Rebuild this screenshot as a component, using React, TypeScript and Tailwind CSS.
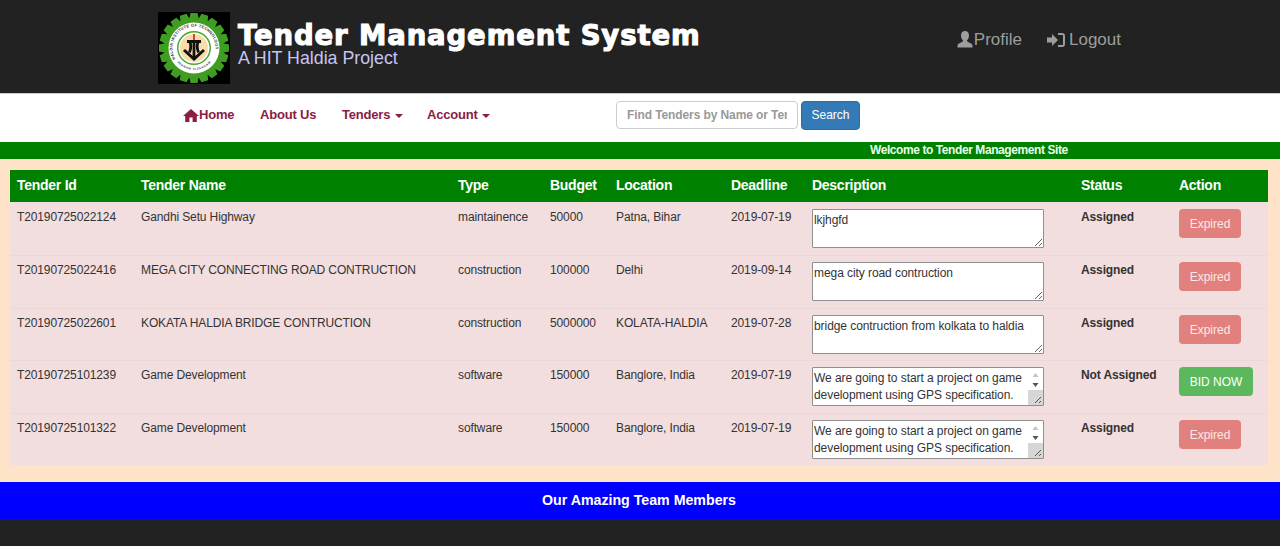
import React from "react";

const longDesc = "We are going to start a project on game development using GPS specification. The project will run for a long period of time.";

const tenders = [
  { id: "T20190725022124", name: "Gandhi Setu Highway", type: "maintainence", budget: "50000", location: "Patna, Bihar", deadline: "2019-07-19", desc: "lkjhgfd", status: "Assigned" },
  { id: "T20190725022416", name: "MEGA CITY CONNECTING ROAD CONTRUCTION", type: "construction", budget: "100000", location: "Delhi", deadline: "2019-09-14", desc: "mega city road contruction", status: "Assigned" },
  { id: "T20190725022601", name: "KOKATA HALDIA BRIDGE CONTRUCTION", type: "construction", budget: "5000000", location: "KOLATA-HALDIA", deadline: "2019-07-28", desc: "bridge contruction from kolkata to haldia", status: "Assigned" },
  { id: "T20190725101239", name: "Game Development", type: "software", budget: "150000", location: "Banglore, India", deadline: "2019-07-19", desc: longDesc, status: "Not Assigned" },
  { id: "T20190725101322", name: "Game Development", type: "software", budget: "150000", location: "Banglore, India", deadline: "2019-07-19", desc: longDesc, status: "Assigned" },
];

// row heights of the screenshot, they don't come out even
const rowHeights = ["h-[53px]", "h-[53px]", "h-[52px]", "h-[53px]", "h-[52px]"];

function Logo() {
  const teeth = Array.from({ length: 20 }, (_, i) => i * 18);
  return (
    <svg width="72" height="72" viewBox="0 0 72 72" className="shrink-0 bg-black">
      {teeth.map((a) => (
        <path key={a} d="M31 8l1.500-7h7L41 8z" fill="#3f9e22" transform={`rotate(${a} 36 36)`} />
      ))}
      <circle cx="36" cy="36" r="30" fill="#3f9e22" />
      <circle cx="36" cy="36" r="25.500" fill="#fff" />
      <path id="logoArc" d="M 17.500 47 A 21.500 21.500 0 1 1 54.500 47" fill="none" />
      <text fontSize="4" fontWeight="700" fontFamily="'Liberation Sans', sans-serif" fill="#333">
        <textPath href="#logoArc" textLength="80">HALDIA INSTITUTE OF TECHNOLOGY</textPath>
      </text>
      <path id="logoArcLow" d="M 19 50 A 22 22 0 0 0 53 50" fill="none" />
      <text fontSize="3" fontWeight="700" fontFamily="'Liberation Sans', sans-serif" fill="#444">
        <textPath href="#logoArcLow" textLength="38">JNANAM VIJNANAM</textPath>
      </text>
      <circle cx="36" cy="36" r="17" fill="#47a62c" />
      <circle cx="36" cy="36" r="15.500" fill="#fff" />
      <circle cx="36" cy="36" r="14" fill="#fbdca8" />
      <path d="M36 22v6" stroke="#c0261c" strokeWidth="1.600" />
      <path d="M29 29.500h14M31.500 29.500c2 3 1.500 7 0 11M40.500 29.500c-2 3-1.500 7 0 11M36 28v18" stroke="#111" strokeWidth="2.800" fill="none" />
      <path d="M26 38l10 9 10-9" stroke="#111" strokeWidth="3" fill="none" />
    </svg>
  );
}

function Caret() {
  return <span className="ml-[1px] inline-block align-middle border-x-[4px] border-t-[4px] border-x-transparent border-t-[#8a1c45]" />;
}

// fake classic scrollbar, the headless browser only has overlay ones
function ScrollBar() {
  return (
    <svg width="15" height="37" viewBox="0 0 15 37" className="absolute right-[1px] top-[1px]">
      <rect width="15" height="37" fill="#fff" />
      <rect y="22" width="15" height="15" fill="#d6d6d6" />
      <path d="M7.500 5l3 4h-6z" fill="#c4c4c4" />
      <path d="M7.500 19l3-4h-6z" fill="#555" />
      <path d="M7 35l6-6M11 35l2-2" stroke="#555" strokeWidth="1" />
    </svg>
  );
}

export default function App() {
  return (
    <div className="min-h-[546px] bg-[#fee3c9] font-['Liberation_Sans',Arial,sans-serif] text-[12px] tracking-[-0.120px] text-[#333]">
      {/* HEADER */}
      <header className="flex h-[94px] items-start border-b border-[#d9c8b4] bg-[#222] tracking-normal">
        <div className="ml-[158px] mt-3 flex items-start">
          <Logo />
          <div className="ml-[8px] mt-[8px]">
            <div className="font-['DejaVu_Sans',sans-serif] text-[27.500px] font-bold leading-[30px] tracking-[0.880px] text-white [-webkit-text-stroke:1.100px_white]">Tender Management System</div>
            <div className="text-[17.800px] leading-[16px] text-[#c5c5f5]">A HIT Haldia Project</div>
          </div>
        </div>
        <div className="ml-auto mr-[159px] mt-[29px] flex gap-[25px] text-[17px] leading-[22px] text-[#9d9d9d]">
          <span className="flex items-center">
            <svg width="18" height="18" viewBox="0 0 17 18" fill="currentColor"><path d="M8.500 0c2.600 0 4 2 4 4.600 0 2-.9 4-2.100 5 .1 1 .8 1.300 2.200 2 1.900.9 3.400 1.600 3.400 3.400v1.500H1v-1.500c0-1.800 1.500-2.500 3.400-3.400 1.400-.7 2.100-1 2.200-2-1.200-1-2.100-3-2.100-5C4.500 2 5.900 0 8.500 0z" /></svg>
            Profile
          </span>
          <span className="flex items-center gap-[3px]">
            <svg width="19" height="16" viewBox="0 0 19 16" fill="currentColor"><path d="M0 5.500h5V2l6 6-6 6v-3.500H0z" /><path d="M11 1h4c2 0 3 1.200 3 3v8c0 1.800-1 3-3 3h-4v-2h4c.8 0 1-.4 1-1V4c0-.6-.2-1-1-1h-4z" /></svg>
            Logout
          </span>
        </div>
      </header>

      {/* NAV */}
      <nav className="flex h-[48px] items-center bg-white pb-[6px] pl-[183px] text-[13px] font-bold tracking-[-0.200px] text-[#8a1c45]">
        <span className="flex w-[77px] items-center">
          <svg width="16" height="13" viewBox="0 0 16 13" fill="currentColor"><path d="M8 0l8 7h-2.200v6H9.600V8.500H6.400V13H2.200V7H0z" /></svg>
          Home
        </span>
        <span className="w-[82px]">About Us</span>
        <span className="w-[85px]">Tenders <Caret /></span>
        <span className="w-[189px]">Account <Caret /></span>
        <input
          readOnly
          placeholder="Find Tenders by Name or Tender Id"
          className="h-[28px] w-[182px] rounded border border-[#ccc] bg-white px-[10px] text-[12px] font-bold tracking-[-0.100px] outline-none placeholder:text-[#999]"
        />
        <button className="ml-[3px] h-[29px] w-[59px] rounded border border-[#2e6da4] bg-[#337ab7] text-[12px] font-normal tracking-normal text-white">Search</button>
      </nav>

      {/* MARQUEE */}
      <div className="h-[17px] bg-[#008000] pl-[870px] text-[12px] font-bold leading-[16px] tracking-[-0.420px] text-[#e8ffe8]">Welcome to Tender Management Site</div>

      {/* TABLE */}
      <div className="px-[10px] pt-[11px]">
        <table className="w-[1258px] table-fixed border-separate border-spacing-0 bg-[#f2dede]">
          <colgroup>
            <col className="w-[124px]" />
            <col className="w-[317px]" />
            <col className="w-[92px]" />
            <col className="w-[66px]" />
            <col className="w-[115px]" />
            <col className="w-[81px]" />
            <col className="w-[269px]" />
            <col className="w-[98px]" />
            <col className="w-[96px]" />
          </colgroup>
          <thead>
            <tr className="h-[32px] bg-[#008000] text-left text-[14px] font-bold tracking-[-0.270px] text-white">
              {["Tender Id", "Tender Name", "Type", "Budget", "Location", "Deadline", "Description", "Status", "Action"].map((h) => (
                <th key={h} className="px-[7px] pb-[1px] font-bold">{h}</th>
              ))}
            </tr>
          </thead>
          <tbody>
            {tenders.map((t, i) => {
              const cell = i > 0 ? "border-t border-[#ebd8d8] px-[7px] pt-[6px]" : "px-[7px] pt-[7px]";
              return (
                <tr key={t.id} className={`align-top ${rowHeights[i]}`}>
                  <td className={`${cell} leading-[17px]`}>{t.id}</td>
                  <td className={`${cell} leading-[17px]`}>{t.name}</td>
                  <td className={`${cell} leading-[17px]`}>{t.type}</td>
                  <td className={`${cell} leading-[17px]`}>{t.budget}</td>
                  <td className={`${cell} leading-[17px]`}>{t.location}</td>
                  <td className={`${cell} leading-[17px]`}>{t.deadline}</td>
                  <td className={cell}>
                    <div className="relative w-[232px]">
                      <textarea
                        readOnly
                        rows={2}
                        value={t.desc}
                        className={`block h-[39px] w-[232px] rounded-[1px] border border-[#8f8f8f] bg-white pl-[1px] pt-[2px] text-[12px] leading-[17px] tracking-[-0.070px] text-[#333] ${t.desc === longDesc ? "resize-none overflow-hidden pr-[16px]" : ""}`}
                      />
                      {t.desc === longDesc && <ScrollBar />}
                    </div>
                  </td>
                  <td className={`${cell} font-bold leading-[17px]`}>{t.status}</td>
                  <td className={cell}>
                    {t.status === "Assigned" ? (
                      <button className="h-[29px] w-[62px] rounded bg-[#e2807d] text-[12px] tracking-normal text-[#fbe9e8]">Expired</button>
                    ) : (
                      <button className="h-[29px] w-[74px] rounded bg-[#5cb85c] text-[12px] tracking-normal text-white">BID NOW</button>
                    )}
                  </td>
                </tr>
              );
            })}
          </tbody>
        </table>
      </div>

      {/* FOOTER */}
      <div className="mt-[17px] flex h-[37px] items-center justify-center bg-[#0000ff] pt-[1px] pr-[2px] text-[14.200px] font-bold tracking-normal text-white">Our Amazing Team Members</div>
      <div className="h-[27px] bg-[#222]" />
    </div>
  );
}
